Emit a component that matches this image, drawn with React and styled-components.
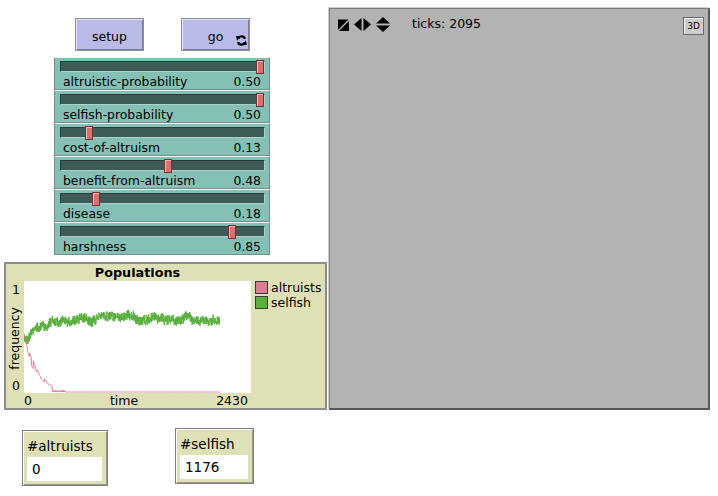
import styled, { createGlobalStyle } from 'styled-components'

const GlobalStyle = createGlobalStyle`
  body {
    margin: 0;
    background: #ffffff;
    font-family: "DejaVu Sans", "Liberation Sans", sans-serif;
    font-size: 12px;
    color: #000;
  }
`

const sliders = [
  { name: 'altruistic-probability', value: '0.50', pos: 1 },
  { name: 'selfish-probability', value: '0.50', pos: 1 },
  { name: 'cost-of-altruism', value: '0.13', pos: 0.125 },
  { name: 'benefit-from-altruism', value: '0.48', pos: 0.53 },
  { name: 'disease', value: '0.18', pos: 0.16 },
  { name: 'harshness', value: '0.85', pos: 0.855 },
]

// deterministic noise so the plot looks the same every run
function mulberry32(seed) {
  let a = seed
  return () => {
    a |= 0
    a = (a + 0x6d2b79f5) | 0
    let t = Math.imul(a ^ (a >>> 15), 1 | a)
    t = (t + Math.imul(t ^ (t >>> 7), 61 | t)) ^ t
    return ((t ^ (t >>> 14)) >>> 0) / 4294967296
  }
}

const PLOT_W = 227
const PLOT_H = 112
const MAX_T = 2430
const TICKS = 2095

function buildSeries() {
  const rand = mulberry32(11)
  const green = []
  const pink = []
  let slow = 0
  let held = 0
  for (let t = 0; t <= TICKS; t += 2) {
    slow += -slow * 0.02 + (rand() - 0.5) * 0.018
    const target =
      0.655 - 0.155 * Math.exp(-t / 190) - 0.06 * Math.exp(-(((t - 40) / 30) ** 2))
    const g = target + slow * Math.min(1, t / 200) + (rand() - 0.5) * 0.085
    if (t % 20 === 0) held = rand() - 0.5
    let p = 0.5 * Math.exp(-t / 140) * (1 + held * 0.3)
    if (t > 300 && t < 440) p = rand() < 0.3 ? 0.012 : 0.003
    if (t >= 440) p = 0
    const x = (t / MAX_T) * PLOT_W
    green.push(`${x.toFixed(2)},${(111 - g * 111).toFixed(2)}`)
    pink.push(`${x.toFixed(2)},${(111 - Math.max(0, p) * 111).toFixed(2)}`)
  }
  return { green: green.join(' '), pink: pink.join(' ') }
}

const series = buildSeries()

const Page = styled.div`
  display: flex;
  align-items: flex-start;
`

const LeftColumn = styled.div`
  width: 329px;
  display: flex;
  flex-direction: column;
`

const ButtonRow = styled.div`
  display: flex;
  gap: 37px;
  padding: 18px 0 0 75px;
`

const Button = styled.div`
  position: relative;
  width: 69px;
  height: 33px;
  box-sizing: border-box;
  background: #babae8;
  border: 1px solid #8e8e98;
  box-shadow: inset 1px 1px 0 #e4e4f6, inset -1px -1px 0 #7c7c9a;
  display: flex;
  align-items: center;
  justify-content: center;
  padding-top: 3px;
  font-size: 12.5px;
`

const ForeverIcon = styled.svg`
  position: absolute;
  right: 2px;
  bottom: 4px;
`

const SliderStack = styled.div`
  display: flex;
  flex-direction: column;
  margin: 6px 0 0 54px;
`

const SliderBox = styled.div`
  width: 216px;
  height: 33px;
  box-sizing: border-box;
  background: #84c0b6;
  border: 1px solid #7a8a88;
  border-top-color: #f2f6f5;
  padding: 3px 4px 0 5px;
`

const Track = styled.div`
  position: relative;
  height: 11px;
  box-sizing: border-box;
  background: #3e5b57;
  border: 1px solid #2a3c3a;
  border-bottom-color: #a9d2cb;
  border-right-color: #a9d2cb;
`

const Thumb = styled.div`
  position: absolute;
  top: -2px;
  left: calc(${({ $pos }) => $pos} * (100% - 8px));
  width: 8px;
  height: 14px;
  box-sizing: border-box;
  background: #d8706d;
  border: 1px solid #6f3535;
  box-shadow: inset 1px 1px 0 #f4b9b3;
`

const SliderLabel = styled.div`
  display: flex;
  justify-content: space-between;
  margin-top: 2px;
  padding: 0 4px 0 3px;
  line-height: 15px;
  font-size: 12.4px;
`

const Plot = styled.div`
  width: 323px;
  height: 148px;
  box-sizing: border-box;
  margin: 7px 0 0 4px;
  background: #e0e0b7;
  border: 2px solid #8c8c8c;
  display: grid;
  grid-template-columns: 18px ${PLOT_W}px 1fr;
  grid-template-rows: 17px ${PLOT_H}px 1fr;
`

const PlotTitle = styled.div`
  grid-column: 2;
  text-align: center;
  font-weight: bold;
  font-size: 12.8px;
  line-height: 17px;
`

const YAxis = styled.div`
  grid-column: 1;
  grid-row: 2;
  display: flex;
  flex-direction: column;
  align-items: flex-end;
  padding: 2px 4px 0 0;
  line-height: 14px;
  font-size: 12.5px;
`

const YLabelSlot = styled.div`
  flex: 1;
  align-self: stretch;
  display: flex;
  align-items: center;
  justify-content: center;
  padding-left: 2px;
`

const YLabel = styled.span`
  writing-mode: vertical-rl;
  transform: rotate(180deg);
  line-height: 13px;
`

const PlotArea = styled.svg`
  grid-column: 2;
  grid-row: 2;
  background: #ffffff;
  display: block;
`

const Legend = styled.div`
  grid-column: 3;
  grid-row: 1 / span 3;
  padding: 17px 0 0 4px;
  display: flex;
  flex-direction: column;
  gap: 2px;
  font-size: 12.5px;
`

const LegendItem = styled.div`
  display: flex;
  align-items: center;
  gap: 3px;
  line-height: 13px;
`

const Swatch = styled.span`
  width: 13px;
  height: 13px;
  box-sizing: border-box;
  background: ${({ $color }) => $color};
  border: 1px solid #3a3a3a;
`

const XAxis = styled.div`
  grid-column: 2;
  grid-row: 3;
  display: flex;
  justify-content: space-between;
  padding: 1px 3px 0 0;
  line-height: 14px;
  font-size: 12.5px;
`

const MonitorRow = styled.div`
  display: flex;
  align-items: flex-start;
  margin-top: 18px;
  padding-left: 22px;
  gap: 67px;
`

const Monitor = styled.div`
  width: ${({ $width }) => $width}px;
  height: 56px;
  box-sizing: border-box;
  margin-top: ${({ $top }) => $top}px;
  background: #e0e0b7;
  border: 1px solid #7d7d7d;
  box-shadow: inset 1px 1px 0 #ffffff, inset -1px -1px 0 #9a9a88;
  padding: 5px 5px 0 4px;
  font-size: 13.5px;
`

const MonitorLabel = styled.div`
  line-height: 20px;
`

const MonitorValue = styled.div`
  margin-top: 1px;
  height: 24px;
  background: #ffffff;
  padding-left: 5px;
  line-height: 24px;
`

const ViewFrame = styled.div`
  width: 381px;
  height: 402px;
  box-sizing: border-box;
  margin-top: 8px;
  background: #b3b3b3;
  border: 1px solid #7d7d7d;
  border-right: 2px solid #575757;
  border-bottom: 2px solid #575757;
  box-shadow: -1px -1px 0 #cfcfcf;
`

const ViewToolbar = styled.div`
  display: flex;
  align-items: flex-start;
  padding: 8px 4px 0 8px;
`

const ToolIcons = styled.div`
  display: flex;
  align-items: center;
  gap: 5px;
`

const Ticks = styled.div`
  margin-left: 22px;
  flex: 1;
  font-size: 12.5px;
  line-height: 14px;
`

const ThreeD = styled.div`
  width: 21px;
  height: 18px;
  box-sizing: border-box;
  background: #cdcdcd;
  border: 1px solid #6a6a6a;
  box-shadow: inset 1px 1px 0 #f0f0f0;
  font-size: 9px;
  display: flex;
  align-items: center;
  justify-content: center;
`

const App = () => (
  <>
    <GlobalStyle />
    <Page>
      <LeftColumn>
        <ButtonRow>
          <Button>setup</Button>
          <Button>
            go
            <ForeverIcon width="11" height="11" viewBox="0 0 10 10">
              <path d="M8.2 3.6A3.4 3.4 0 0 0 2 3" fill="none" stroke="#000" strokeWidth="2.2" />
              <path d="M1.8 6.4A3.4 3.4 0 0 0 8 7" fill="none" stroke="#000" strokeWidth="2.2" />
              <path d="M0 1 L4.2 1.4 L1 5.2 Z" fill="#000" />
              <path d="M10 9 L5.8 8.6 L9 4.8 Z" fill="#000" />
            </ForeverIcon>
          </Button>
        </ButtonRow>

        <SliderStack>
          {sliders.map((s) => (
            <SliderBox key={s.name}>
              <Track>
                <Thumb $pos={s.pos} />
              </Track>
              <SliderLabel>
                <span>{s.name}</span>
                <span>{s.value}</span>
              </SliderLabel>
            </SliderBox>
          ))}
        </SliderStack>

        <Plot>
          <PlotTitle>Populations</PlotTitle>
          <YAxis>
            <span>1</span>
            <YLabelSlot>
              <YLabel>frequency</YLabel>
            </YLabelSlot>
            <span>0</span>
          </YAxis>
          <PlotArea width={PLOT_W} height={PLOT_H} viewBox={`0 0 ${PLOT_W} ${PLOT_H}`}>
            <polyline points={series.green} fill="none" stroke="#59b03c" strokeWidth="1" />
            <polyline points={series.pink} fill="none" stroke="#e07c92" strokeWidth="1" />
          </PlotArea>
          <Legend>
            <LegendItem>
              <Swatch $color="#e07c92" />
              altruists
            </LegendItem>
            <LegendItem>
              <Swatch $color="#59b03c" />
              selfish
            </LegendItem>
          </Legend>
          <XAxis>
            <span>0</span>
            <span>time</span>
            <span>2430</span>
          </XAxis>
        </Plot>

        <MonitorRow>
          <Monitor $width={86} $top={2}>
            <MonitorLabel>#altruists</MonitorLabel>
            <MonitorValue>0</MonitorValue>
          </Monitor>
          <Monitor $width={79} $top={0}>
            <MonitorLabel>#selfish</MonitorLabel>
            <MonitorValue>1176</MonitorValue>
          </Monitor>
        </MonitorRow>
      </LeftColumn>

      <ViewFrame>
        <ViewToolbar>
          <ToolIcons>
            <svg width="11" height="12" viewBox="0 0 11 12">
              <path d="M0 0.5 H10.5 L0 11 Z" fill="#000" />
              <path d="M11 2 V12 H1 Z" fill="#000" />
            </svg>
            <svg width="17" height="13" viewBox="0 0 17 13">
              <path d="M7.5 0 V13 L0 6.5 Z" fill="#000" />
              <path d="M9.5 0 V13 L17 6.5 Z" fill="#000" />
            </svg>
            <svg width="14" height="15" viewBox="0 0 14 15">
              <path d="M0 6.5 H14 L7 0 Z" fill="#000" />
              <path d="M0 8.5 H14 L7 15 Z" fill="#000" />
            </svg>
          </ToolIcons>
          <Ticks>ticks: {TICKS}</Ticks>
          <ThreeD>3D</ThreeD>
        </ViewToolbar>
      </ViewFrame>
    </Page>
  </>
)

export default App
